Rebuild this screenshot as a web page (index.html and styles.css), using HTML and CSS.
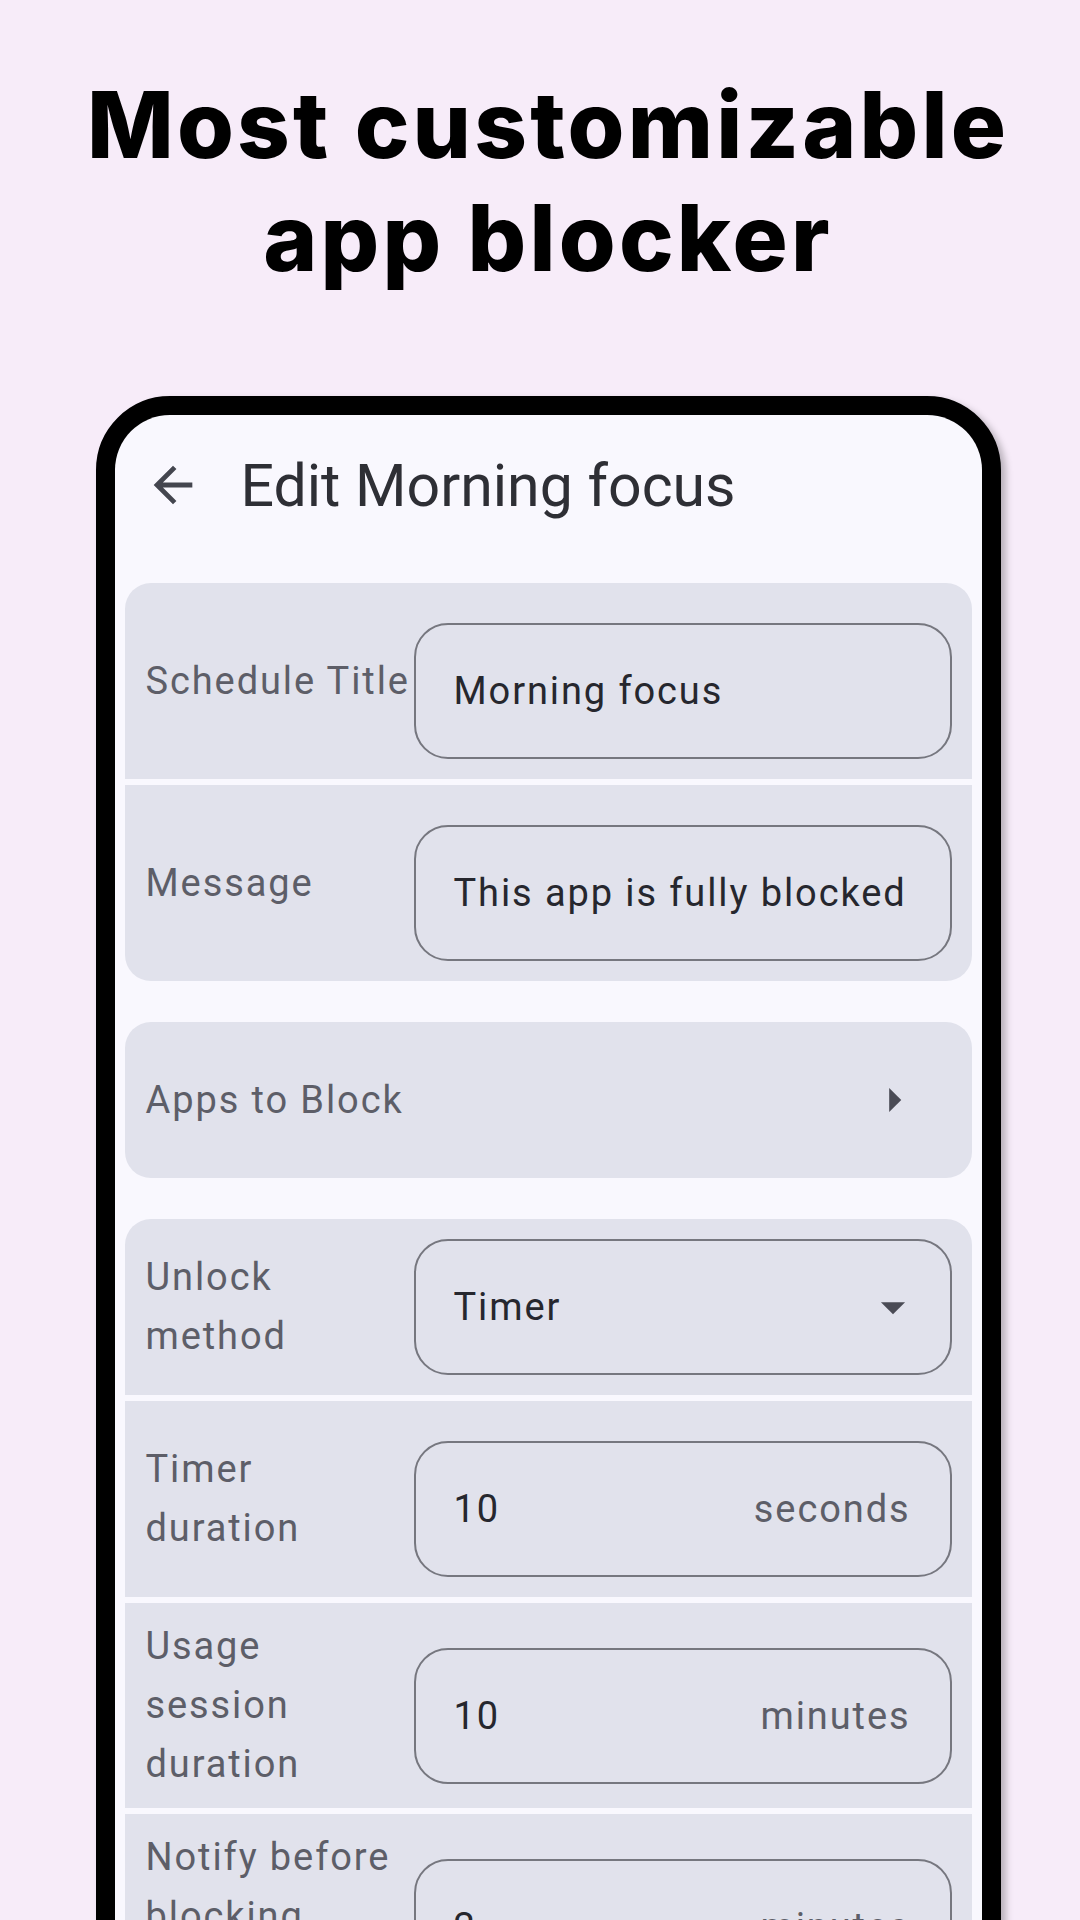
FILE: index.html
```html
<!DOCTYPE html>
<html lang="en">
<head>
    <meta charset="UTF-8">
    <meta name="viewport" content="width=device-width, initial-scale=1.0">
    <title>Most customizable app blocker</title>
    <link rel="stylesheet" href="styles.css">
</head>
<body>
    <div class="page">
        <h1 class="headline">Most customizable<br>app blocker</h1>

        <div class="phone">
            <div class="screen">
                <header class="app-bar">
                    <svg class="back" viewBox="0 0 24 24" width="58" height="58">
                        <path d="M20 11H7.83l5.59-5.59L12 4l-8 8 8 8 1.41-1.41L7.83 13H20v-2z" fill="#44464f"/>
                    </svg>
                    <h2>Edit Morning focus</h2>
                </header>

                <div class="content">
                    <section class="card">
                        <div class="row">
                            <span class="label">Schedule Title</span>
                            <div class="field text">
                                <div class="box"><span class="value">Morning focus</span></div>
                            </div>
                        </div>
                        <div class="row">
                            <span class="label">Message</span>
                            <div class="field text">
                                <div class="box"><span class="value">This app is fully blocked</span></div>
                            </div>
                        </div>
                    </section>

                    <section class="card">
                        <div class="row link">
                            <span class="label">Apps to Block</span>
                            <svg class="icon" viewBox="0 0 24 24" width="58" height="58">
                                <path d="M10 17l5-5-5-5v10z" fill="#4a4b55"/>
                            </svg>
                        </div>
                    </section>

                    <section class="card">
                        <div class="row">
                            <span class="label">Unlock<br>method</span>
                            <div class="field select">
                                <div class="box">
                                    <span class="value">Timer</span>
                                    <svg class="icon" viewBox="0 0 24 24" width="58" height="58">
                                        <path d="M7 10l5 5 5-5z" fill="#4a4b55"/>
                                    </svg>
                                </div>
                            </div>
                        </div>
                        <div class="row">
                            <span class="label">Timer<br>duration</span>
                            <div class="field text">
                                <div class="box"><span class="value">10</span><span class="unit">seconds</span></div>
                            </div>
                        </div>
                        <div class="row">
                            <span class="label">Usage<br>session<br>duration</span>
                            <div class="field text">
                                <div class="box"><span class="value">10</span><span class="unit">minutes</span></div>
                            </div>
                        </div>
                        <div class="row">
                            <span class="label tall">Notify before<br>blocking</span>
                            <div class="field text">
                                <div class="box"><span class="value">2</span><span class="unit">minutes</span></div>
                            </div>
                        </div>
                    </section>
                </div>
            </div>
        </div>
    </div>
</body>
</html>
```

FILE: styles.css
```css
html, body {
    margin: 0;
    height: 1920px;
    overflow: hidden;
}
body {
    background-color: #f7ecf9;
    font-family: Roboto, "Noto Sans", sans-serif;
}
.page {
    padding-left: 16px;
}
.headline {
    margin: 68px 0 0;
    font-family: Inter, "Noto Sans", sans-serif;
    font-weight: 800;
    font-size: 92px;
    line-height: 113px;
    letter-spacing: 3.2px;
    text-align: center;
    color: #000;
}
.phone {
    width: 905px;
    height: 1600px;
    margin: 102px auto 0;
    box-sizing: border-box;
    border: 19px solid #000;
    border-radius: 74px;
    background: #000;
    box-shadow: 5px 4px 7px rgba(0, 0, 0, 0.25);
}
.screen {
    height: 100%;
    background-color: #f9f8fe;
    border-radius: 55px 55px 0 0;
    overflow: hidden;
}
.app-bar {
    height: 140px;
    display: flex;
    align-items: center;
    padding-left: 29px;
}
.app-bar h2 {
    margin: 0 0 0 39px;
    font-weight: 400;
    font-size: 59px;
    color: #2e2f35;
}
.content {
    padding: 28px 10px;
    display: flex;
    flex-direction: column;
    gap: 41px;
}
.card {
    display: flex;
    flex-direction: column;
    gap: 6px;
    border-radius: 26px;
    overflow: hidden;
}
.row {
    display: flex;
    align-items: center;
    padding: 14px 20px 14px 21px;
    background-color: #e1e2ec;
}
.row.link {
    height: 156px;
    box-sizing: border-box;
    justify-content: space-between;
    padding-right: 49px;
}
.label {
    flex: 0 0 268px;
    font-size: 38px;
    line-height: 59px;
    letter-spacing: 1.9px;
    color: #5d5e68;
    white-space: nowrap;
}
.label.tall {
    min-height: 177px;
}
.field {
    flex: 1;
}
.field.text {
    padding: 26px 0 6px;
}
.field.select {
    padding: 6px 0;
}
.box {
    height: 136px;
    box-sizing: border-box;
    border: 2px solid #76777f;
    border-radius: 34px;
    padding: 0 39px 0 38px;
    display: flex;
    align-items: center;
    justify-content: space-between;
    font-size: 38px;
    letter-spacing: 1.9px;
}
.field.select .box {
    padding-right: 28px;
}
.value {
    color: #26272e;
    white-space: nowrap;
}
.unit {
    color: #5d5e68;
}
.icon {
    display: block;
}
```
